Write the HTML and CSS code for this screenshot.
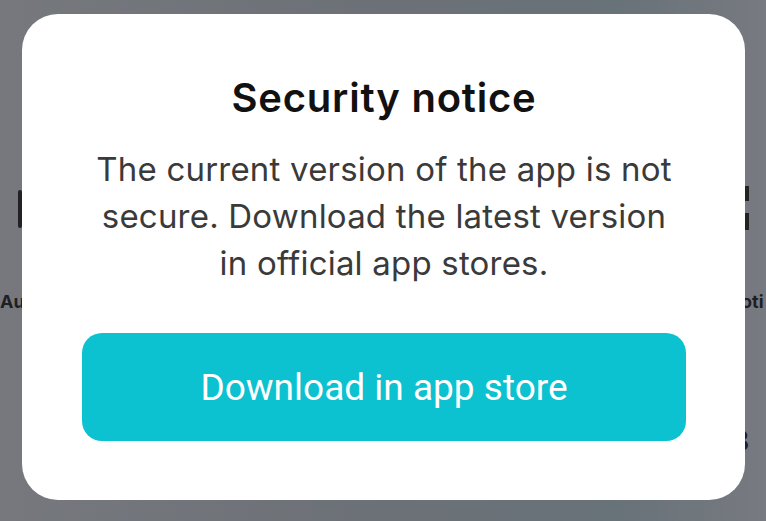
FILE: index.html
```html
<!DOCTYPE html>
<html>
<head>
<meta charset="utf-8">
<link rel="stylesheet" href="styles.css">
</head>
<body>
<div class="screen">
  <div class="backdrop">
    <span class="frag frag-bar-l"></span>
    <span class="frag frag-au">Au</span>
    <span class="frag frag-bar-r1"></span>
    <span class="frag frag-bar-r2"></span>
    <span class="frag frag-oti">oti</span>
    <span class="frag frag-o">8</span>
  </div>
  <div class="modal">
    <h1 class="title">Security notice</h1>
    <p class="message">The current version of the app is not<br>secure. Download the latest version<br>in official app stores.</p>
    <button class="cta">Download in app store</button>
  </div>
</div>
</body>
</html>
```

FILE: styles.css
```css
html, body {
  margin: 0;
  padding: 0;
}
body {
  width: 766px;
  height: 521px;
  overflow: hidden;
  font-family: "Inter", "Noto Sans", sans-serif;
}
.screen {
  position: relative;
  width: 766px;
  height: 521px;
  background: linear-gradient(90deg, #76787d 0%, #6c7177 50%, #687279 80%, #777a80 100%);
  display: flex;
  padding: 14px 21px 21px 22px;
  box-sizing: border-box;
}
.backdrop {
  position: absolute;
  inset: 0;
}
.frag {
  position: absolute;
  color: #1e1f22;
  font-family: "Inter", sans-serif;
  font-weight: 700;
  font-size: 18px;
}
.frag-bar-l { left: 18px; top: 190px; width: 4px; height: 38px; background: #222; border-radius: 2px; }
.frag-au { left: 0; top: 291px; }
.frag-bar-r1 { left: 745px; top: 186px; width: 4px; height: 15px; background: #222; }
.frag-bar-r2 { left: 745px; top: 213px; width: 4px; height: 17px; background: #222; }
.frag-oti { left: 741px; top: 291px; }
.frag-o { left: 731px; top: 424px; font-size: 28px; }
.modal {
  position: relative;
  flex: 1;
  background: #ffffff;
  border-radius: 36px;
  display: flex;
  flex-direction: column;
  align-items: center;
  padding: 60px 59px 0 60px;
  box-sizing: border-box;
}
.title {
  margin: 0;
  font-size: 40px;
  line-height: 48px;
  font-weight: 600;
  color: #111111;
  letter-spacing: 0.8px;
}
.message {
  margin: 24px 0 0;
  font-size: 33px;
  line-height: 47px;
  font-weight: 400;
  color: #3a3a3a;
  text-align: center;
  white-space: nowrap;
  letter-spacing: 0.2px;
}
.cta {
  margin-top: 46px;
  width: 100%;
  height: 108px;
  border: none;
  border-radius: 20px;
  background: #0cc2d0;
  color: #ffffff;
  font-family: "Roboto", sans-serif;
  font-size: 37px;
  font-weight: 400;
  cursor: pointer;
}
```
